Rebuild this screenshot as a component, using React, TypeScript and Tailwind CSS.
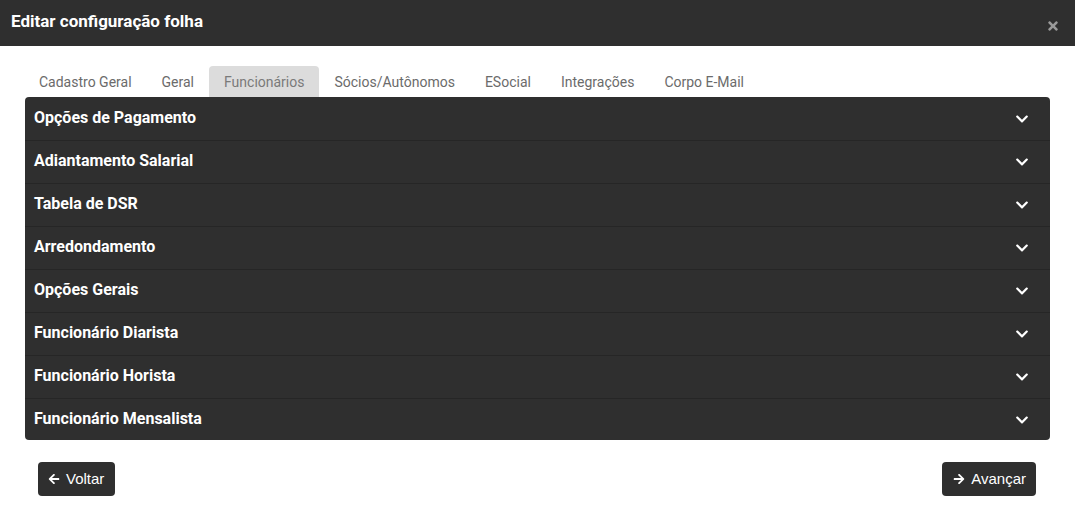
import React from 'react';
import { FaChevronDown, FaArrowLeft, FaArrowRight, FaTimes } from 'react-icons/fa';

const tabs = ['Cadastro Geral', 'Geral', 'Funcionários', 'Sócios/Autônomos', 'ESocial', 'Integrações', 'Corpo E-Mail'];

const sections = [
    'Opções de Pagamento',
    'Adiantamento Salarial',
    'Tabela de DSR',
    'Arredondamento',
    'Opções Gerais',
    'Funcionário Diarista',
    'Funcionário Horista',
    'Funcionário Mensalista',
];

const App: React.FC = () => {
    return (
        <div className="w-[1075px] h-[522px] bg-white font-['Roboto',sans-serif]">
            <div className="h-[46px] bg-[#2f2f2f] flex items-center justify-between pl-[11px] pr-[15px]">
                <span className="text-white font-bold text-[17px] mt-[-2px]">Editar configuração folha</span>
                <FaTimes size={14} className="text-[#9a9a9a] mt-[6px]" />
            </div>

            <div className="px-[25px] pt-[20px]">
                <div className="flex ml-[-1px] h-[31px]">
                    {tabs.map((t) => (
                        <div
                            key={t}
                            className={
                                t === 'Funcionários'
                                    ? 'px-[15px] flex items-center pt-[1px] text-[14px] text-[#7a7a7a] bg-[#dcdcdc] rounded-t-[4px]'
                                    : 'px-[15px] flex items-center pt-[1px] text-[14px] text-[#6b6b6b]'
                            }
                        >
                            {t}
                        </div>
                    ))}
                </div>

                <div className="bg-[#2f2f2f] rounded-[4px] overflow-hidden">
                    {sections.map((s, i) => (
                        <div
                            key={s}
                            className={
                                i === 0
                                    ? 'h-[43px] flex items-center justify-between pl-[9px] pr-[21px]'
                                    : i === sections.length - 1
                                      ? 'h-[42px] flex items-center justify-between pl-[9px] pr-[21px] border-t border-[#262626]'
                                      : 'h-[43px] flex items-center justify-between pl-[9px] pr-[21px] border-t border-[#262626]'
                            }
                        >
                            <span className="text-white font-bold text-[16px] mt-[-2px]">{s}</span>
                            <FaChevronDown size={14} className="text-white" />
                        </div>
                    ))}
                </div>

                <div className="flex justify-between pl-[13px] pr-[14px] mt-[22px] font-['Liberation_Sans',Arial,sans-serif]">
                    <button className="h-[34px] pl-[10px] pr-[11px] bg-[#2f2f2f] text-white rounded-[4px] flex items-center gap-[6px] text-[15px]">
                        <FaArrowLeft size={12} />
                        Voltar
                    </button>
                    <button className="h-[34px] pl-[11px] pr-[10px] bg-[#2f2f2f] text-white rounded-[4px] flex items-center gap-[6px] text-[15px]">
                        <FaArrowRight size={12} />
                        Avançar
                    </button>
                </div>
            </div>
        </div>
    );
};

export default App;
